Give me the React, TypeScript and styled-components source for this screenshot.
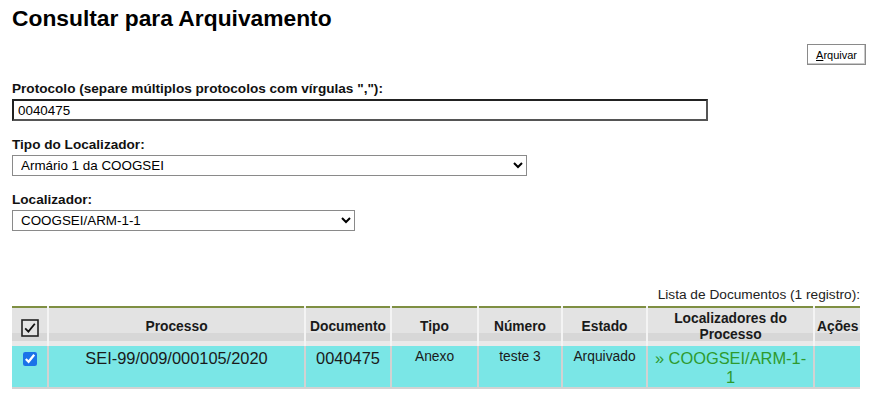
import React from 'react';
import styled, { createGlobalStyle } from 'styled-components';

const GlobalStyle = createGlobalStyle`
  body {
    margin: 0;
    background: #ffffff;
    font-family: 'Liberation Sans', Arial, sans-serif;
    color: #000000;
  }
`;

const columns = [
  { key: 'processo', title: 'Processo', width: 257 },
  { key: 'documento', title: 'Documento', width: 86 },
  { key: 'tipo', title: 'Tipo', width: 87 },
  { key: 'numero', title: 'Número', width: 84 },
  { key: 'estado', title: 'Estado', width: 85 },
  { key: 'localizadores', title: 'Localizadores do Processo', width: 167 },
  { key: 'acoes', title: 'Ações', width: 46 },
];

const HeaderCheck = () => (
  <svg width="18" height="18" viewBox="0 0 18 18">
    <rect x="1" y="1" width="16" height="16" fill="#e4e4e4" stroke="#222" strokeWidth="1.6" />
    <path d="M4.2 9.4 L7.4 12.6 L13.8 4.8" fill="none" stroke="#111" strokeWidth="1.8" />
  </svg>
);

const App = () => {
  return (
    <Page>
      <GlobalStyle />
      <Title>Consultar para Arquivamento</Title>

      <Toolbar>
        <Button>
          <u>A</u>rquivar
        </Button>
      </Toolbar>

      <Field>
        <Label>Protocolo (separe múltiplos protocolos com vírgulas ","):</Label>
        <TextInput defaultValue="0040475" />
      </Field>

      <Field>
        <Label>Tipo do Localizador:</Label>
        <Select $width={515} defaultValue="1">
          <option value="1">Armário 1 da COOGSEI</option>
        </Select>
      </Field>

      <Field>
        <Label>Localizador:</Label>
        <Select $width={343} defaultValue="1">
          <option value="1">COOGSEI/ARM-1-1</option>
        </Select>
      </Field>

      <Caption>Lista de Documentos (1 registro):</Caption>
      <Table>
        <colgroup>
          <col style={{ width: 36 }} />
          {columns.map((c) => (
            <col key={c.key} style={{ width: c.width }} />
          ))}
        </colgroup>
        <thead>
          <tr>
            <HeadCell>
              <CheckWrap>
                <HeaderCheck />
              </CheckWrap>
            </HeadCell>
            {columns.map((c) => (
              <HeadCell key={c.key}>{c.title}</HeadCell>
            ))}
          </tr>
        </thead>
        <tbody>
          <tr>
            <Cell>
              <RowCheck type="checkbox" defaultChecked />
            </Cell>
            <Cell $big>SEI-99/009/000105/2020</Cell>
            <Cell $big>0040475</Cell>
            <Cell>Anexo</Cell>
            <Cell>teste 3</Cell>
            <Cell>Arquivado</Cell>
            <Cell $big>
              <LocLink>» COOGSEI/ARM-1-1</LocLink>
            </Cell>
            <Cell />
          </tr>
        </tbody>
      </Table>
    </Page>
  );
};

const Page = styled.div`
  padding: 0 12px 0 12px;
  width: 848px;
`;

const Title = styled.h1`
  margin: 0;
  padding-top: 5px;
  font-size: 22.8px;
  line-height: 26px;
  font-weight: bold;
  color: #000;
`;

const Toolbar = styled.div`
  display: flex;
  justify-content: flex-end;
  margin-top: 13px;
  padding-right: 0;
`;

const Button = styled.button`
  height: 21px;
  padding: 0 8px;
  font-family: 'Liberation Sans', Arial, sans-serif;
  font-size: 11px;
  color: #000;
  background: #ffffff;
  border: 1px solid #8a8a8a;
  box-shadow: inset -1px -1px 0 #c8c8c8;
  margin-right: -6px;
`;

const Field = styled.div`
  display: flex;
  flex-direction: column;
  align-items: flex-start;
  margin-top: 16px;

  &:first-of-type {
    margin-top: 0;
  }
`;

const Label = styled.label`
  font-size: 13.6px;
  font-weight: bold;
  line-height: 16px;
  margin-bottom: 2px;
  color: #111;
`;

const TextInput = styled.input`
  box-sizing: border-box;
  width: 696px;
  height: 22px;
  padding: 0 4px;
  font-family: 'Liberation Sans', Arial, sans-serif;
  font-size: 13.4px;
  color: #000;
  border: 2px solid #222;
  border-right-color: #555;
  border-bottom-color: #555;
  outline: none;
`;

const Select = styled.select<{ $width: number }>`
  box-sizing: border-box;
  width: ${({ $width }) => $width}px;
  height: 21px;
  padding: 0 4px;
  font-family: 'Liberation Sans', Arial, sans-serif;
  font-size: 13.4px;
  color: #000;
  background: #fff;
  border: 1px solid #8a8a8a;
  border-radius: 0;
`;

const Caption = styled.div`
  margin-top: 56px;
  text-align: right;
  font-size: 13.7px;
  line-height: 16px;
  color: #222;
  padding-right: 0;
`;

const Table = styled.table`
  margin-top: 3px;
  width: 848px;
  table-layout: fixed;
  border-collapse: collapse;
  border-top: 2px solid #7f8f42;
  border-bottom: 2px solid #d2d2d2;
`;

const HeadCell = styled.th`
  height: 38px;
  padding: 0 2px;
  font-size: 13.8px;
  font-weight: bold;
  line-height: 16px;
  color: #1a1a1a;
  text-align: center;
  vertical-align: middle;
  background: linear-gradient(
    to bottom,
    #e3e3e3 0%,
    #e3e3e3 66%,
    #d7d7d7 66%,
    #d7d7d7 88%,
    #e9e9e9 88%,
    #e9e9e9 100%
  );
  border-left: 2px solid #f4f4f4;

  &:first-child {
    border-left: none;
  }
`;

const CheckWrap = styled.div`
  display: flex;
  justify-content: center;
  padding-top: 1px;
`;

const Cell = styled.td<{ $big?: boolean }>`
  height: 40px;
  padding: 3px 3px 0 3px;
  font-size: ${({ $big }) => ($big ? '16.4px' : '13.8px')};
  line-height: ${({ $big }) => ($big ? '19px' : '16px')};
  color: #1a1a1a;
  text-align: center;
  vertical-align: top;
  background: #7ae6e6;
  border-left: 2px solid #d2d2d2;
  box-sizing: border-box;

  &:first-child {
    border-left: none;
  }
`;

const RowCheck = styled.input`
  width: 14px;
  height: 14px;
  margin: 3px 0 0 0;
  accent-color: #1a73e8;
`;

const LocLink = styled.a`
  color: #2e9a2e;
  text-decoration: none;
  cursor: pointer;
`;

export default App;
